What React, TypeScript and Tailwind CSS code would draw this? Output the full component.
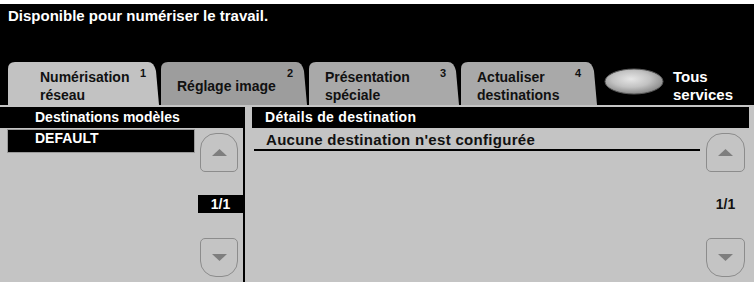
import React from "react";

const tabs = [
  { w: 152, fill: "#c2c2c2", lines: ["Numérisation", "réseau"], num: "1", pl: 32, pt: 6, numX: 132 },
  { w: 147, fill: "#9d9d9d", lines: ["Réglage image"], num: "2", pl: 16, pt: 15, numX: 126 },
  { w: 151, fill: "#a9a9a9", lines: ["Présentation", "spéciale"], num: "3", pl: 16, pt: 6, numX: 131 },
  { w: 137, fill: "#a9a9a9", lines: ["Actualiser", "destinations"], num: "4", pl: 16, pt: 6, numX: 114 },
];

function Tab({ w, fill, lines, num, pl, pt, numX }: (typeof tabs)[number]) {
  const h = 43;
  return (
    <div className="relative h-[43px] shrink-0" style={{ width: w }}>
      <svg className="absolute inset-0" width={w} height={h}>
        <path
          d={`M0,${h} V7 Q0,0 7,0 H${w - 12} Q${w - 6},0 ${w - 4},9 L${w - 1},${h} Z`}
          fill={fill}
        />
      </svg>
      <div className="relative text-[14px] font-bold leading-[18px] text-[#111]" style={{ paddingLeft: pl, paddingTop: pt }}>
        {lines.map((l) => (
          <div key={l}>{l}</div>
        ))}
      </div>
      <span className="absolute top-[3px] text-[11px] font-bold text-[#111]" style={{ left: numX }}>
        {num}
      </span>
    </div>
  );
}

function Arrow({ up }: { up?: boolean }) {
  return (
    <svg width="15" height="7" viewBox="0 0 15 7">
      <polygon points={up ? "7.5,0 15,7 0,7" : "0,0 15,0 7.5,7"} fill="#7e7e7e" />
    </svg>
  );
}

function ScrollButton({ up }: { up?: boolean }) {
  return (
    <div
      className={
        "flex h-[39px] items-center justify-center border-[1.5px] border-[#8c8c8c] " +
        (up ? "rounded-t-[16px] rounded-b-[5px]" : "rounded-t-[5px] rounded-b-[16px]")
      }
    >
      <Arrow up={up} />
    </div>
  );
}

export default function App() {
  return (
    <div className="w-[754px] h-[282px] overflow-hidden bg-[#c4c4c4] font-['Liberation_Sans',Arial,sans-serif]">
      <div className="h-[4px] bg-white" />
      <div className="flex h-[101px] flex-col bg-black">
        <div className="pl-[8px] pt-[3px] text-[15px] font-bold leading-[17px] text-white">
          Disponible pour numériser le travail.
        </div>
        <div className="mt-auto flex h-[43px] items-start pl-[8px]">
          <div className="flex gap-[1px]">
            {tabs.map((t) => (
              <Tab key={t.num} {...t} />
            ))}
          </div>
          <svg className="ml-[6px] mt-[6px] shrink-0" width="60" height="27" viewBox="0 0 60 27">
            <defs>
              <radialGradient id="pill" cx="45%" cy="40%" r="60%">
                <stop offset="0%" stopColor="#e6e6e6" />
                <stop offset="55%" stopColor="#c2c2c2" />
                <stop offset="100%" stopColor="#8a8a8a" />
              </radialGradient>
            </defs>
            <ellipse cx="30" cy="13.5" rx="29" ry="12.5" fill="url(#pill)" stroke="#5a5a5a" strokeWidth="1" />
          </svg>
          <div className="ml-[9px] pt-[6px] text-[15px] font-bold leading-[18px] text-white">
            <div>Tous</div>
            <div>services</div>
          </div>
        </div>
      </div>

      <div className="flex h-[177px] pt-[2px]">
        {/* left panel */}
        <div className="flex w-[245px] flex-col">
          <div className="h-[21px] bg-black pl-[35px] text-[14px] font-bold leading-[21px] text-white">
            Destinations modèles
          </div>
          <div className="flex flex-1 border-r-2 border-black">
            <div className="w-[198px]">
              <div className="ml-[7px] mt-[1px] h-[24px] w-[188px] border border-[#9a9a9a] bg-black pl-[27px] text-[14px] font-bold leading-[16px] text-white">
                DEFAULT
              </div>
            </div>
            <div className="w-[45px]">
              <div className="ml-[2px] mt-[5px] w-[38px]">
                <ScrollButton up />
              </div>
              <div className="mt-[23px] h-[18px] bg-black text-center text-[14px] font-bold leading-[18px] text-white">
                1/1
              </div>
              <div className="ml-[2px] mt-[25px] w-[38px]">
                <ScrollButton />
              </div>
            </div>
          </div>
        </div>

        {/* right panel */}
        <div className="ml-[7px] flex w-[497px] flex-col">
          <div className="h-[21px] bg-black pl-[13px] text-[14px] font-bold leading-[21px] tracking-[0.3px] text-white">
            Détails de destination
          </div>
          <div className="flex flex-1">
            <div className="w-[448px]">
              <div className="ml-[2px] border-b-2 border-black pb-[1px] pl-[12px] pt-[3px] text-[15px] font-bold leading-[17px] tracking-[0.3px] text-[#111]">
                Aucune destination n'est configurée
              </div>
            </div>
            <div className="flex-1">
              <div className="ml-[6px] mt-[5px] w-[39px]">
                <ScrollButton up />
              </div>
              <div className="ml-[6px] mt-[23px] h-[18px] w-[39px] text-center text-[14px] font-bold leading-[18px] text-[#111]">
                1/1
              </div>
              <div className="ml-[6px] mt-[25px] w-[39px]">
                <ScrollButton />
              </div>
            </div>
          </div>
        </div>
      </div>
    </div>
  );
}
